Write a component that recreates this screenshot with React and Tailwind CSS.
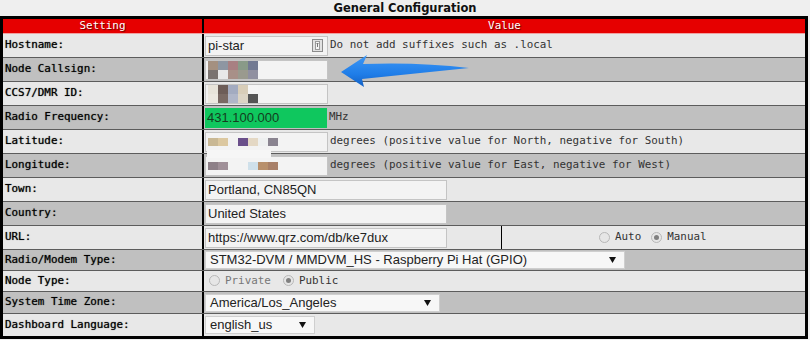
import React from 'react';

const mono = "font-['DejaVu_Sans_Mono',monospace] text-[10.9px]";
const sans = "font-['Liberation_Sans',Arial,sans-serif] text-[13px]";

const Blur = ({ cells, h = 'h-[8px]' }) => (
    <div className="flex flex-col">
        {cells.map((row, i) => (
            <div key={i} className="flex">
                {row.map((c, j) => (
                    <div key={j} className={`w-[10px] ${h}`} style={{ background: c }} />
                ))}
            </div>
        ))}
    </div>
);

const TextBox = ({ width = 'w-[123px]', children, className = '' }) => (
    <div className={`h-[20px] ${width} border border-[#c4c4c4] bg-[#f3f3f3] flex items-center pl-[2px] text-[#222] ${sans} ${className}`}>
        {children}
    </div>
);

const SelectBox = ({ width, text }) => (
    <div className={`h-[18px] ${width} border border-[#cfcfcf] bg-[#f7f7f7] flex items-center justify-between pl-[4px] pr-[8px] text-[#222] ${sans}`}>
        <span>{text}</span>
        <svg width="7" height="6" viewBox="0 0 7 6"><path d="M0 0 H7 L3.5 6 Z" fill="#111" /></svg>
    </div>
);

const Radio = ({ checked, label, dim }) => (
    <span className="flex items-center gap-[5px]">
        <span className="w-[11px] h-[11px] rounded-full border border-[#b8b8b8] bg-[#e6e6e6] flex items-center justify-center">
            {checked && <span className="w-[5px] h-[5px] rounded-full bg-[#808080]" />}
        </span>
        <span className={`${mono} ${dim ? 'text-[#777]' : 'text-[#333]'}`}>{label}</span>
    </span>
);

const Hint = ({ children, className = '' }) => (
    <span className={`${mono} text-[#333] ml-[2px] ${className}`}>{children}</span>
);

const rows = [
    {
        label: 'Hostname:', h: 'h-[24px]',
        value: (
            <>
                <TextBox className="justify-between pr-[4px]">
                    <span>pi-star</span>
                    <svg width="11" height="13" viewBox="0 0 11 13">
                        <rect x="0.5" y="0.5" width="10" height="12" fill="#e2e2e2" stroke="#8c8c8c" />
                        <rect x="3.5" y="2.5" width="4" height="8" fill="#f4f4f4" stroke="#9a9a9a" />
                        <path d="M5.5 4 L5.5 8 M4.5 5 L5.5 4 L6.5 5" stroke="#777" fill="none" />
                    </svg>
                </TextBox>
                <Hint>Do not add suffixes such as .local</Hint>
            </>
        ),
    },
    {
        label: 'Node Callsign:', h: 'h-[24px]',
        value: (
            <TextBox>
                <Blur h="h-[9px]" cells={[['#a49080', '#8e96a2', '#a88082', '#899a88', '#727a92'], ['#7a7370', '#e8e8e8', '#a89088', '#9a9a8e', '#9090a0']]} />
            </TextBox>
        ),
    },
    {
        label: 'CCS7/DMR ID:', h: 'h-[24px]',
        value: (
            <TextBox>
                <Blur h="h-[9px]" cells={[['#e8e4da', '#6d5d58', '#a3abc0', '#d8cdb8', '#f4f4f4'], ['#ece8e0', '#7a6a64', '#b0b6c8', '#dcd4c4', '#555555']]} />
            </TextBox>
        ),
    },
    {
        label: 'Radio Frequency:', h: 'h-[24px]',
        value: (
            <>
                <div className={`h-[20px] w-[122px] bg-[#0fc75e] flex items-center pl-[2px] text-[#143c20] ${sans}`}>431.100.000</div>
                <Hint className="text-[#4a3a5a]">MHz</Hint>
            </>
        ),
    },
    {
        label: 'Latitude:', h: 'h-[24px]',
        value: (
            <>
                <div className="relative">
                    <TextBox>
                        <Blur cells={[['#c9b894', '#dcc8a0', '#f2f2f2', '#6a4f8a', '#e4d8c4', '#eef0f0', '#8a8490']]} />
                    </TextBox>
                    <div className="absolute left-[2px] top-[18px] w-[64px] h-[8px] bg-[#f6f6f6] z-10" />
                </div>
                <Hint>degrees (positive value for North, negative for South)</Hint>
            </>
        ),
    },
    {
        label: 'Longitude:', h: 'h-[24px]',
        value: (
            <>
                <TextBox>
                    <Blur cells={[['#8e8088', '#a09098', '#f3f3f3', '#f3f3f3', '#cfe0ea', '#b8906c', '#a88068']]} />
                </TextBox>
                <Hint>degrees (positive value for East, negative for West)</Hint>
            </>
        ),
    },
    { label: 'Town:', h: 'h-[24px]', value: <TextBox width="w-[242px]">Portland, CN85QN</TextBox> },
    { label: 'Country:', h: 'h-[24px]', value: <TextBox width="w-[242px]">United States</TextBox> },
    {
        label: 'URL:', h: 'h-[24px]', split: true,
        value: <TextBox width="w-[242px]">https://www.qrz.com/db/ke7dux</TextBox>,
        extra: (
            <div className="flex items-center gap-[10px] pl-[97px]">
                <Radio label="Auto" />
                <Radio label="Manual" checked />
            </div>
        ),
    },
    { label: 'Radio/Modem Type:', h: 'h-[21px]', value: <SelectBox width="w-[420px]" text="STM32-DVM / MMDVM_HS - Raspberry Pi Hat (GPIO)" /> },
    {
        label: 'Node Type:', h: 'h-[21px]',
        value: (
            <div className="flex items-center gap-[12px] pl-[4px]">
                <Radio label="Private" dim />
                <Radio label="Public" checked />
            </div>
        ),
    },
    { label: 'System Time Zone:', h: 'h-[22px]', value: <SelectBox width="w-[235px]" text="America/Los_Angeles" /> },
    { label: 'Dashboard Language:', h: 'h-[22px]', value: <SelectBox width="w-[110px]" text="english_us" /> },
];

export default function App() {
    return (
        <div className="relative w-[810px] h-[340px] bg-[#efefef] overflow-hidden">
            <div className="h-[16px] flex items-center justify-center font-['DejaVu_Sans',Verdana,sans-serif] font-bold text-[11.5px] text-[#111] pt-[2px]">
                General Configuration
            </div>
            <div className="w-[808px] border-[3px] border-black bg-[#e8e8e8]">
                <div className="flex h-[15px] bg-[#e60000] border-b border-[#f0a0a0]">
                    <div className={`w-[201px] border-r-2 border-black flex items-center justify-center text-white ${mono} [text-shadow:1px_1px_1px_#600]`}>Setting</div>
                    <div className={`flex-1 flex items-center justify-center text-white ${mono} [text-shadow:1px_1px_1px_#600]`}>Value</div>
                </div>
                {rows.map((r, i) => (
                    <div key={r.label} className={`flex ${r.h} ${i % 2 ? 'bg-[#c0c0c0]' : 'bg-[#e8e8e8]'} ${i < rows.length - 1 ? 'border-b border-[#5c5c5c]' : ''}`}>
                        <div className={`w-[201px] border-r-2 border-black flex items-center pl-[2px] text-[#000] ${mono} [text-shadow:0_0_1px_#444]`}>
                            {r.label}
                        </div>
                        {r.split ? (
                            <>
                                <div className="w-[298px] border-r border-black flex items-center pl-[1px]">{r.value}</div>
                                <div className="flex-1 flex items-center">{r.extra}</div>
                            </>
                        ) : (
                            <div className="flex-1 flex items-center pl-[1px]">{r.value}</div>
                        )}
                    </div>
                ))}
            </div>
            <svg className="absolute left-0 top-0 pointer-events-none" width="810" height="340">
                <defs>
                    <linearGradient id="arrowfill" x1="0" y1="0" x2="0" y2="1">
                        <stop offset="0" stopColor="#3d97f5" />
                        <stop offset="0.6" stopColor="#1f7de8" />
                        <stop offset="1" stopColor="#1360c4" />
                    </linearGradient>
                </defs>
                <path d="M341 72 L367 55 L363 64 Q420 62 469 68 Q420 73 362 79 L364 87 Z" fill="url(#arrowfill)" />
            </svg>
        </div>
    );
}
